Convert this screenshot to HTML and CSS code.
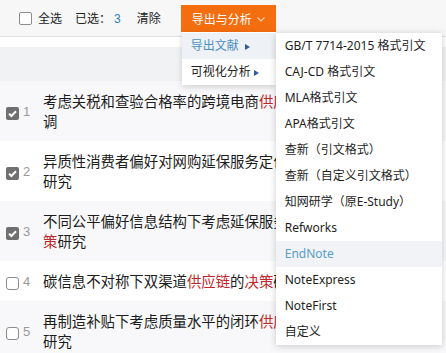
FILE: index.html
```html
<!DOCTYPE html>
<html lang="zh-CN">
<head>
<meta charset="utf-8">
<title>导出与分析</title>
<link rel="stylesheet" href="styles.css">
</head>
<body>
<div class="toolbar">
  <label class="check-all"><span class="box"></span><span class="lbl">全选</span></label>
  <span class="selected">已选：<em class="count">3</em></span>
  <a class="clear">清除</a>
  <div class="export">
    <button class="export-btn">导出与分析<svg class="chev" width="8" height="5" viewBox="0 0 8 5"><polyline points="0.5,0.5 4,4 7.5,0.5" fill="none" stroke="#fbd3b4" stroke-width="1.2"/></svg></button>
    <div class="menu">
      <div class="menu-item active">导出文献 <i class="tri"></i></div>
      <div class="menu-item">可视化分析<i class="tri"></i></div>
      <ul class="submenu">
        <li>GB/T 7714-2015 格式引文</li>
        <li>CAJ-CD 格式引文</li>
        <li>MLA格式引文</li>
        <li>APA格式引文</li>
        <li>查新（引文格式）</li>
        <li>查新（自定义引文格式）</li>
        <li>知网研学（原E-Study）</li>
        <li>Refworks</li>
        <li class="hover">EndNote</li>
        <li>NoteExpress</li>
        <li>NoteFirst</li>
        <li>自定义</li>
      </ul>
    </div>
  </div>
</div>
<div class="band"></div>
<div class="thead"></div>
<div class="rows">
  <div class="row odd">
    <span class="cb checked"><svg width="13" height="13" viewBox="0 0 13 13"><rect width="13" height="13" rx="2" fill="#707070"/><path d="M3 6.6 L5.4 9 L10 4.2" fill="none" stroke="#fff" stroke-width="2"/></svg></span>
    <span class="num">1</span>
    <a class="title">考虑关税和查验合格率的跨境电商<em>供应链</em>定价决策协调</a>
  </div>
  <div class="row">
    <span class="cb checked"><svg width="13" height="13" viewBox="0 0 13 13"><rect width="13" height="13" rx="2" fill="#707070"/><path d="M3 6.6 L5.4 9 L10 4.2" fill="none" stroke="#fff" stroke-width="2"/></svg></span>
    <span class="num">2</span>
    <a class="title">异质性消费者偏好对网购延保服务定价及<em>供应链</em><em>决策</em>研究</a>
  </div>
  <div class="row odd">
    <span class="cb checked"><svg width="13" height="13" viewBox="0 0 13 13"><rect width="13" height="13" rx="2" fill="#707070"/><path d="M3 6.6 L5.4 9 L10 4.2" fill="none" stroke="#fff" stroke-width="2"/></svg></span>
    <span class="num">3</span>
    <a class="title">不同公平偏好信息结构下考虑延保服务<em>供应链</em>定价<em>决策</em>研究</a>
  </div>
  <div class="row">
    <span class="cb"></span>
    <span class="num">4</span>
    <a class="title">碳信息不对称下双渠道<em>供应链</em>的<em>决策</em>研究</a>
  </div>
  <div class="row odd">
    <span class="cb"></span>
    <span class="num">5</span>
    <a class="title">再制造补贴下考虑质量水平的闭环<em>供应链</em>定价与<em>决策</em>研究</a>
  </div>
</div>
</body>
</html>
```

FILE: styles.css
```css
html, body {
  margin: 0;
  padding: 0;
  overflow: hidden;
  background: #fff;
}
body {
  font-family: "Noto Sans", "Noto Sans CJK SC", sans-serif;
  color: #222;
  width: 446px;
  height: 353px;
}

.toolbar {
  height: 36px;
  background: #f7f7f8;
  border-bottom: 1px solid #e2e2e4;
  display: flex;
  align-items: center;
  padding-left: 19px;
  font-size: 12px;
  position: relative;
  z-index: 5;
}
.check-all {
  display: flex;
  align-items: center;
}
.box {
  width: 11px;
  height: 11px;
  border: 1px solid #8c8c8c;
  border-radius: 2px;
  background: #fff;
  margin-top: 1px;
}
.lbl {
  margin-left: 6px;
}
.selected {
  margin-left: 13px;
}
.count {
  font-style: normal;
  color: #2f7bb8;
  margin-left: 3px;
  font-family: "Liberation Sans", sans-serif;
}
.clear {
  margin-left: 16px;
  color: #222;
}
.export {
  position: relative;
  margin-left: 20px;
  margin-top: 1px;
}
.export-btn {
  display: flex;
  align-items: center;
  width: 95px;
  height: 27px;
  border: 0;
  padding: 0 0 0 11px;
  background: #f46e10;
  color: #fff;
  font-family: inherit;
  font-size: 12px;
}
.chev {
  margin-left: 5px;
  margin-top: 1px;
}

.menu {
  position: absolute;
  top: 100%;
  left: 1px;
  width: 94px;
  background: #fff;
  padding-top: 1px;
  box-shadow: 0 2px 6px rgba(0, 0, 0, 0.16);
  font-size: 12px;
}
.menu-item {
  height: 26px;
  line-height: 26px;
  padding-left: 9px;
  color: #222;
  white-space: pre;
  display: flex;
  align-items: center;
}
.menu-item.active {
  background: #eef1f5;
  color: #4d8fc4;
}
.tri {
  display: inline-block;
  width: 0;
  height: 0;
  border-left: 5px solid #2f5c9c;
  border-top: 3.5px solid transparent;
  border-bottom: 3.5px solid transparent;
  margin-left: 3px;
  margin-top: 1px;
}

.submenu {
  position: absolute;
  left: 100%;
  top: 1px;
  margin: 0;
  padding: 0;
  list-style: none;
  width: 166px;
  background: #fff;
  box-shadow: 0 1px 7px rgba(0, 0, 0, 0.2);
}
.submenu li {
  height: 26px;
  line-height: 26px;
  padding-left: 9px;
  color: #1e1e1e;
  white-space: nowrap;
}
.submenu li.hover {
  background: #f1f3f6;
  color: #5a9dc8;
}

.band {
  height: 10px;
  background: #fff;
}
.thead {
  height: 34px;
  background: #f1f2f4;
}

.row {
  display: flex;
  align-items: center;
  padding: 11px 0 9px 6px;
  background: #fff;
}
.row.odd {
  background: #f8f8fa;
}
.cb {
  flex: none;
  width: 13px;
  height: 13px;
  margin-top: 3px;
  box-sizing: border-box;
  border: 1px solid #8c8c8c;
  border-radius: 3px;
  background: #fff;
  align-self: center;
}
.cb.checked {
  border: 0;
  background: none;
}
.cb svg {
  display: block;
}
.num {
  flex: none;
  width: 20px;
  margin-left: 4px;
  margin-top: -1px;
  font-family: "Liberation Sans", sans-serif;
  font-size: 13px;
  color: #999;
}
.title {
  flex: none;
  width: 335px;
  font-size: 14.4px;
  line-height: 20px;
  color: #1c1c1c;
}
.title em {
  font-style: normal;
  color: #c0262c;
}
```
